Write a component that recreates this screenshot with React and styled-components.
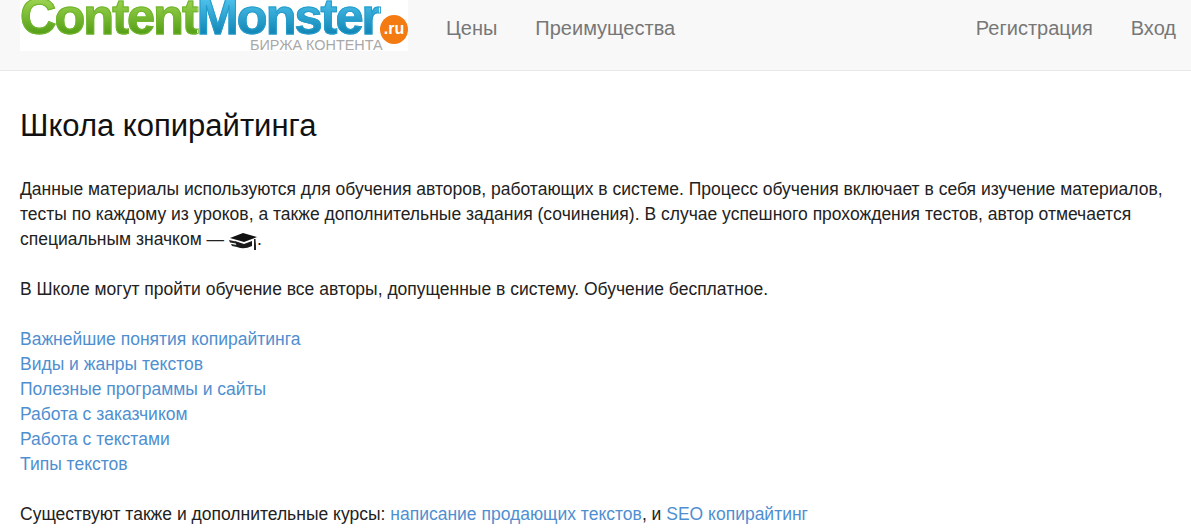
import React from "react";
import styled, { createGlobalStyle } from "styled-components";

const GlobalStyle = createGlobalStyle`
  html, body {
    margin: 0;
    padding: 0;
    background: #fff;
    overflow: hidden;
  }
  body {
    font-family: "Liberation Sans", Arial, sans-serif;
    font-size: 17.5px;
    line-height: 25px;
    color: #222;
  }
`;

const App = () => {
  return (
    <Page>
      <GlobalStyle />
      <Navbar>
        <Logo>
          <Word $from="#9ad24e" $to="#4f9a12" $stroke="#6fb52c">Content</Word>
          <Word $from="#4cc0ea" $to="#0b80b0" $stroke="#259ccd">Monster</Word>
          <Ru>.ru</Ru>
          <Caption>БИРЖА КОНТЕНТА</Caption>
        </Logo>
        <NavList>
          <NavLink href="#">Цены</NavLink>
          <NavLink href="#">Преимущества</NavLink>
        </NavList>
        <NavListRight>
          <NavLink href="#">Регистрация</NavLink>
          <NavLink href="#">Вход</NavLink>
        </NavListRight>
      </Navbar>
      <Content>
        <Title>Школа копирайтинга</Title>
        <Para>
          Данные материалы используются для обучения авторов, работающих в
          системе. Процесс обучения включает в себя изучение материалов, тесты
          по каждому из уроков, а также дополнительные задания (сочинения). В
          случае успешного прохождения тестов, автор отмечается специальным
          значком — <CapIcon />.
        </Para>
        <Para>
          В Школе могут пройти обучение все авторы, допущенные в систему.
          Обучение бесплатное.
        </Para>
        <LinkList>
          <Link href="#">Важнейшие понятия копирайтинга</Link>
          <Link href="#">Виды и жанры текстов</Link>
          <Link href="#">Полезные программы и сайты</Link>
          <Link href="#">Работа с заказчиком</Link>
          <Link href="#">Работа с текстами</Link>
          <Link href="#">Типы текстов</Link>
        </LinkList>
        <Para>
          Существуют также и дополнительные курсы:{" "}
          <Link href="#">написание продающих текстов</Link>, и{" "}
          <Link href="#">SEO копирайтинг</Link>
        </Para>
      </Content>
    </Page>
  );
};

const CapIcon = () => (
  <CapSvg viewBox="0 0 28 18" width="28" height="18">
    <path d="M1 6 L14 1 L28 5 L15 10 Z" fill="#111" />
    <path d="M6 9 L15 12 L23 9 L23 14 Q15 18 8 15 Z" fill="#1a1a1a" />
    <path d="M0 8 L7 9.5 L7 11.5 L1 10.5 Z M2 12 L8 13 L8 15 L3 14 Z" fill="#222" />
    <path d="M25 7 L26.5 7 L27 14 L27 18 L25 18 Z" fill="#222" />
  </CapSvg>
);

export default App;

const Page = styled.div`
  width: 100%;
`;
const Navbar = styled.nav`
  display: flex;
  align-items: flex-start;
  height: 70px;
  padding: 0 15px 0 20px;
  background: #f8f8f8;
  border-bottom: 1px solid #e7e7e7;
`;
const Logo = styled.div`
  position: relative;
  display: flex;
  align-items: flex-start;
  flex: none;
  width: 388px;
  height: 51px;
  background: #fff;
  overflow: hidden;
  font-family: "Liberation Sans", Arial, sans-serif;
  font-weight: 700;
  font-size: 50.5px;
  line-height: 33px;
  letter-spacing: -2px;
`;
const Word = styled.span`
  display: block;
  padding-bottom: 4px;
  background: linear-gradient(${(p) => p.$from}, ${(p) => p.$to});
  -webkit-background-clip: text;
  background-clip: text;
  color: transparent;
  -webkit-text-stroke: 1px ${(p) => p.$stroke};
`;
const Ru = styled.span`
  position: absolute;
  left: 360px;
  top: 15px;
  width: 28px;
  height: 29px;
  border-radius: 50%;
  background: #f47a12;
  color: #fff;
  font-size: 16px;
  line-height: 27px;
  letter-spacing: 0;
  text-align: center;
`;
const Caption = styled.span`
  position: absolute;
  left: 230px;
  top: 37px;
  color: #a8a8a8;
  font-size: 14.4px;
  font-weight: 400;
  line-height: 16px;
  letter-spacing: 0;
`;
const NavList = styled.div`
  display: flex;
  gap: 38px;
  margin-left: 38px;
`;
const NavListRight = styled(NavList)`
  margin-left: auto;
`;
const NavLink = styled.a`
  font-size: 20px;
  line-height: 57px;
  color: #777;
  text-decoration: none;
`;
const Content = styled.main`
  padding: 0 20px;
`;
const Title = styled.h1`
  margin: 36px 0 32px;
  font-size: 31px;
  line-height: 38px;
  font-weight: 400;
  color: #111;
`;
const Para = styled.p`
  margin: 0 0 25px;
`;
const LinkList = styled.div`
  display: flex;
  flex-direction: column;
  align-items: flex-start;
  margin-bottom: 25px;
`;
const Link = styled.a`
  color: #4f8fd0;
  text-decoration: none;
`;
const CapSvg = styled.svg`
  vertical-align: -5px;
`;
